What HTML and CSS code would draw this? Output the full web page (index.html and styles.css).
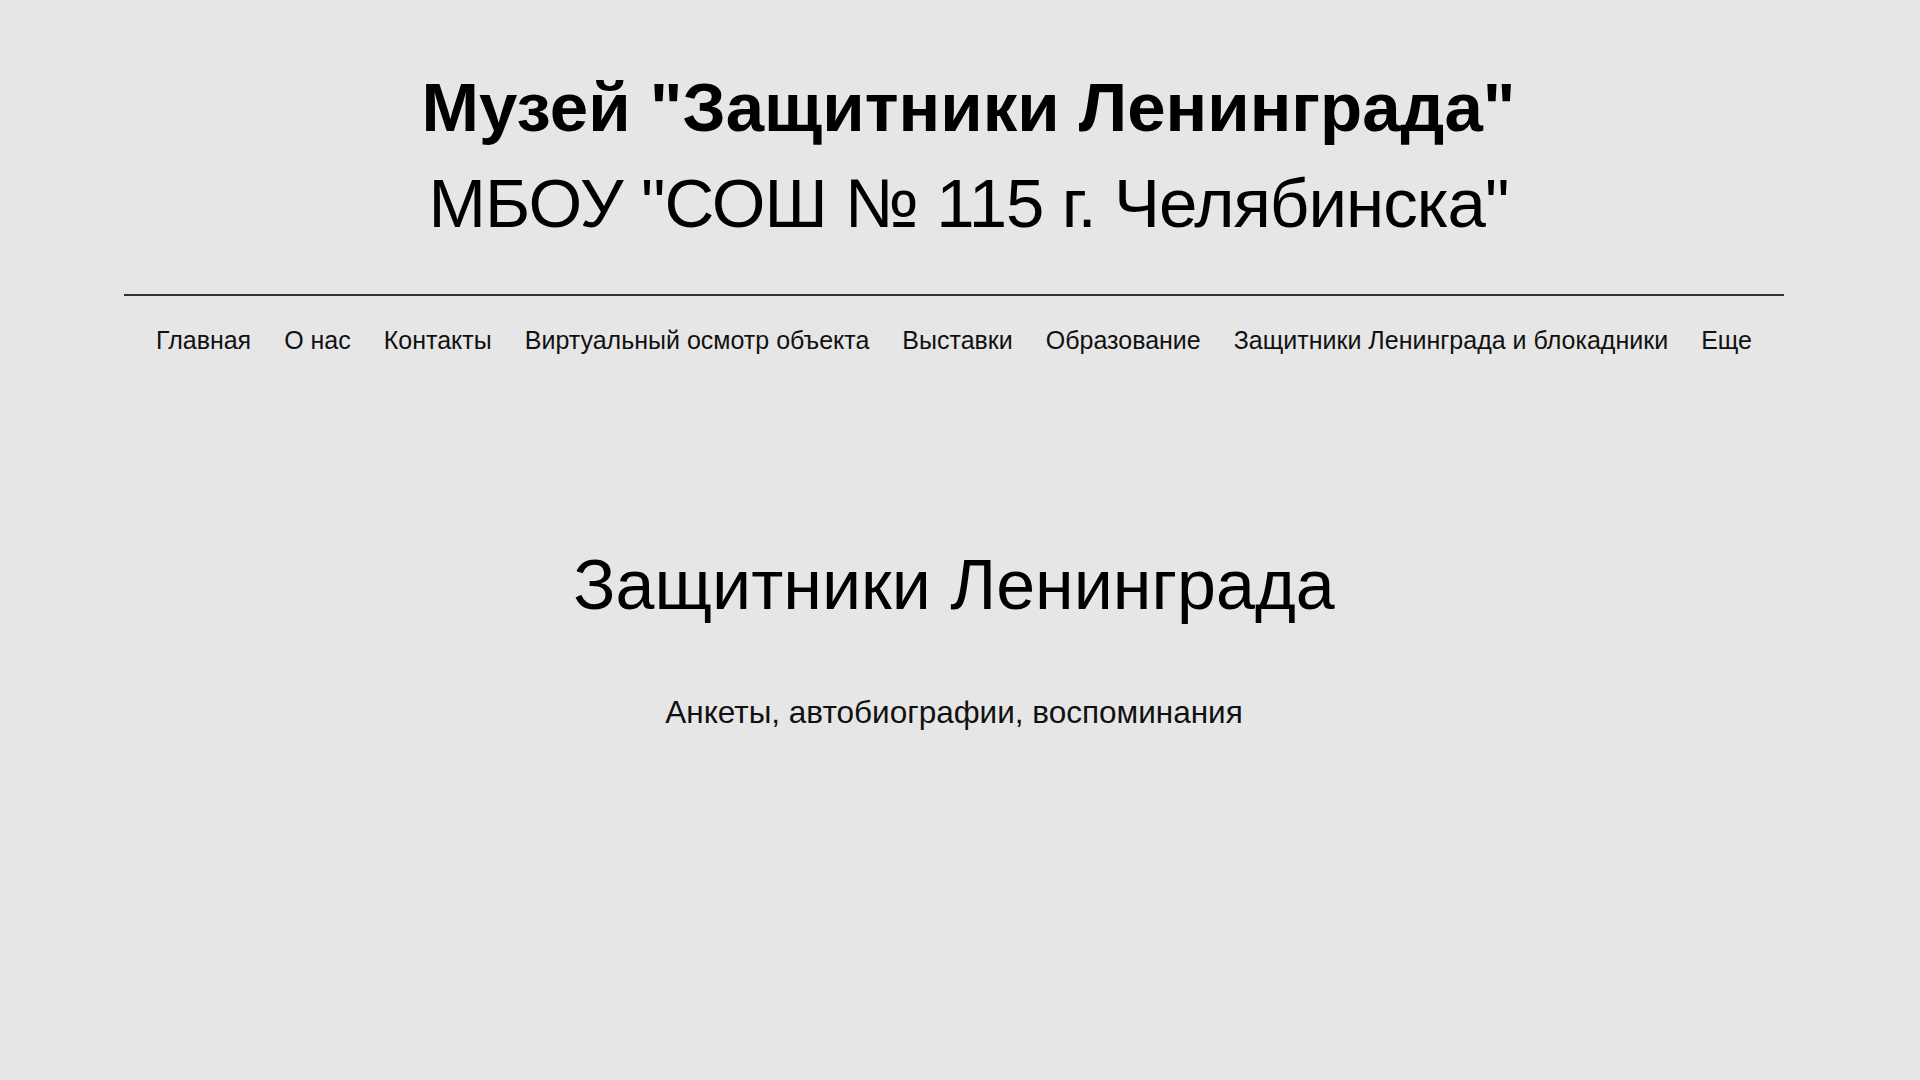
FILE: index.html
```html
<!DOCTYPE html>
<html lang="ru">
<head>
    <meta charset="UTF-8">
    <meta name="viewport" content="width=device-width, initial-scale=1.0">
    <title>Музей "Защитники Ленинграда"</title>
    <link rel="stylesheet" href="styles.css">
</head>
<body>

    <div class="wrap">
        <div class="header">
            <h1 class="site_title">
                <strong>Музей "Защитники Ленинграда"</strong>
                <span>МБОУ "СОШ № 115 г. Челябинска"</span>
            </h1>
            <div class="line"></div>
            <ul class="gnb">
                <li><a href="#">Главная</a></li>
                <li><a href="#">О нас</a></li>
                <li><a href="#">Контакты</a></li>
                <li><a href="#">Виртуальный осмотр объекта</a></li>
                <li><a href="#">Выставки</a></li>
                <li><a href="#">Образование</a></li>
                <li><a href="#">Защитники Ленинграда и блокадники</a></li>
                <li><a href="#">Еще</a></li>
            </ul>
        </div>

        <div class="cont">
            <h2 class="cont_title">Защитники Ленинграда</h2>
            <p class="cont_sub">Анкеты, автобиографии, воспоминания</p>
        </div>
    </div>

</body>
</html>
```

FILE: styles.css
```css
*{margin:0;padding:0;box-sizing:border-box;}
html,body{width:100%;height:100%;}
body{background-color:#e6e6e6;color:#000;font-family:"Liberation Sans",Arial,sans-serif;}
a{color:inherit;text-decoration:none;}
ul{list-style:none;}

.wrap{width:100%;padding-right:12px;}

.header{width:1660px;margin:0 auto;padding-top:60px;}
.site_title{text-align:center;font-size:69px;line-height:96px;padding-left:29px;}
.site_title strong{display:block;font-weight:700;}
.site_title span{display:block;font-weight:400;letter-spacing:-0.95px;}

.line{height:2px;background-color:#333;margin-top:42px;}

.gnb{display:flex;justify-content:center;gap:33px;margin-top:28px;font-size:25px;line-height:32px;color:#111;}

.cont{text-align:center;padding-top:189px;}
.cont_title{font-size:70px;line-height:80px;font-weight:400;}
.cont_sub{margin-top:67px;font-size:31.5px;line-height:40px;color:#111;}
```
